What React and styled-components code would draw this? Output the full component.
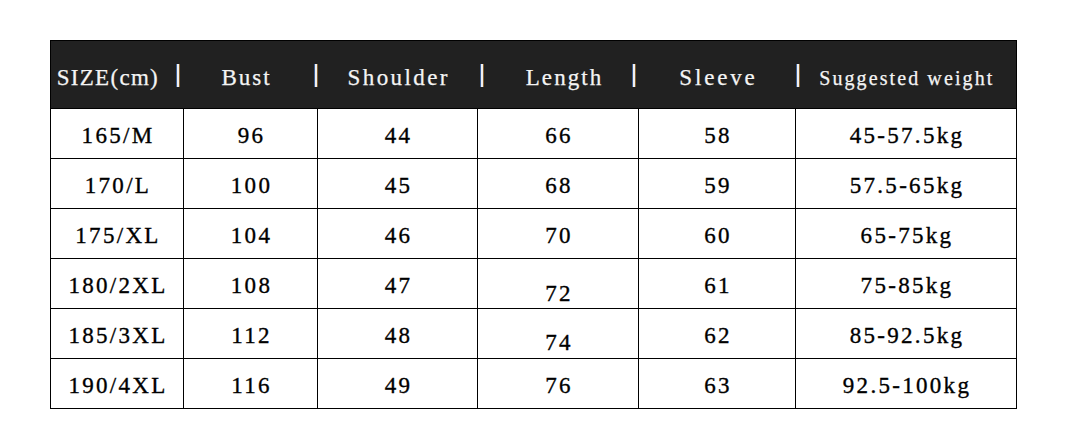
import React from "react";
import styled, { createGlobalStyle } from "styled-components";

const Global = createGlobalStyle`
  html, body { margin: 0; padding: 0; background: #fff; }
  body { font-family: "Liberation Serif", "DejaVu Serif", serif; }
`;

const Page = styled.div`
  width: 1076px;
  height: 443px;
  box-sizing: border-box;
  padding: 40px 0 0 50px;
`;

const Table = styled.table`
  border-collapse: collapse;
  table-layout: fixed;
  width: 967px;
  color: #000;
`;

const Row = styled.tr`
  height: ${(p) => p.$h}px;
`;

const Th = styled.th`
  position: relative;
  padding: 6px ${(p) => p.$pr || 0}px 0 ${(p) => p.$pl || 0}px;
  background: #212121;
  color: #f4f4f4;
  border: 1px solid #000;
  border-left: ${(p) => (p.$first ? "1px solid #000" : "none")};
  border-right: ${(p) => (p.$last ? "1px solid #000" : "none")};
  font-weight: normal;
  font-size: ${(p) => p.$size || 23}px;
  letter-spacing: ${(p) => p.$ls || 2.2}px;
  line-height: 24px;
  text-align: center;
  white-space: nowrap;
  -webkit-text-stroke: 0.25px #f4f4f4;
`;

const Bar = styled.span`
  position: absolute;
  z-index: 1;
  top: 23px;
  right: ${(p) => p.$right}px;
  width: 2px;
  height: 23px;
  background: #f0f0f0;
  box-shadow: -1px 0 0 rgba(80, 150, 255, 0.55), 1px 0 0 rgba(255, 170, 60, 0.45);
`;

const Td = styled.td`
  padding: ${(p) => 4 + (p.$drop || 0)}px 0 0 2px;
  border: 1px solid #000;
  font-size: 23px;
  letter-spacing: 2.3px;
  line-height: 26px;
  text-align: center;
  white-space: nowrap;
  -webkit-text-stroke: 0.35px #000;
`;

const cols = [133, 134, 160, 161, 157, 221];

const header = [
  { label: "SIZE(cm)", pr: 20, bar: 5, ls: 1.3 },
  { label: "Bust", pr: 10, bar: 1, ls: 2 },
  { label: "Shoulder", bar: -5, ls: 2.4 },
  { label: "Length", pl: 11, bar: 4, ls: 2.1 },
  { label: "Sleeve", bar: -3, ls: 2.8 },
  { label: "Suggested weight", size: 20, ls: 2.1 },
];

const rows = [
  ["165/M", "96", "44", "66", "58", "45-57.5kg"],
  ["170/L", "100", "45", "68", "59", "57.5-65kg"],
  ["175/XL", "104", "46", "70", "60", "65-75kg"],
  ["180/2XL", "108", "47", { v: "72", drop: 17 }, "61", "75-85kg"],
  ["185/3XL", "112", "48", { v: "74", drop: 15 }, "62", "85-92.5kg"],
  ["190/4XL", "116", "49", "76", "63", "92.5-100kg"],
];

export default function App() {
  return (
    <Page>
      <Global />
      <Table>
        <colgroup>
          {cols.map((w, i) => (
            <col key={i} style={{ width: w }} />
          ))}
        </colgroup>
        <thead>
          <Row $h={68}>
            {header.map((h, i) => (
              <Th
                key={i}
                $pl={(h.pl || 0) + (h.ls || 2.2)}
                $pr={h.pr}
                $size={h.size}
                $ls={h.ls}
                $first={i === 0}
                $last={i === header.length - 1}
              >
                {h.label}
                {h.bar !== undefined && <Bar $right={h.bar} />}
              </Th>
            ))}
          </Row>
        </thead>
        <tbody>
          {rows.map((r, ri) => (
            <Row key={ri} $h={50}>
              {r.map((c, ci) =>
                typeof c === "string" ? (
                  <Td key={ci}>{c}</Td>
                ) : (
                  <Td key={ci} $drop={c.drop}>
                    {c.v}
                  </Td>
                )
              )}
            </Row>
          ))}
        </tbody>
      </Table>
    </Page>
  );
}
